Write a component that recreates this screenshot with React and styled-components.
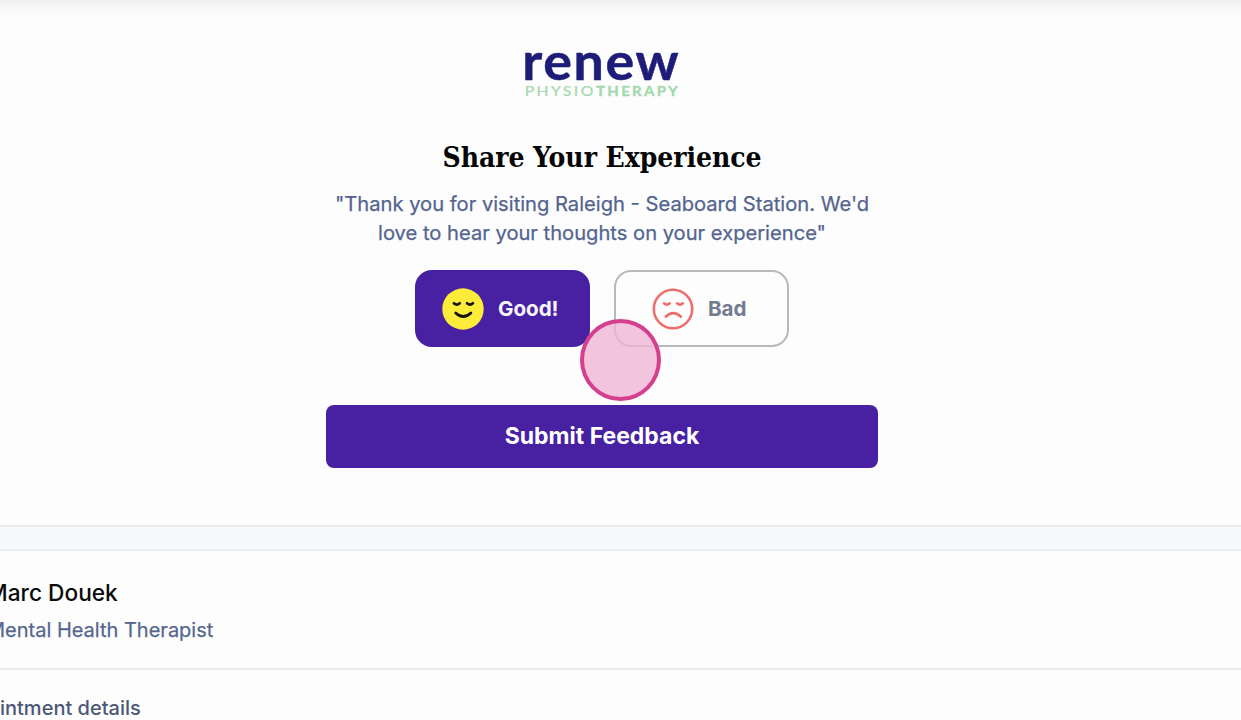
import React, { useState } from 'react';
import styled, { createGlobalStyle } from 'styled-components';

const GlobalStyle = createGlobalStyle`
  * {
    box-sizing: border-box;
  }

  body {
    margin: 0;
    background: #fdfdfd;
    font-family: 'Inter', 'Liberation Sans', sans-serif;
    overflow: hidden;
  }
`;

const Page = styled.div`
  position: relative;
  height: 720px;
  overflow: hidden;
  display: flex;
  flex-direction: column;
  background: #fdfdfd;
`;

const FeedbackSection = styled.section`
  flex: none;
  display: flex;
  flex-direction: column;
  align-items: center;
  height: 527px;
  padding: 46px 37px 0 0;
  background: linear-gradient(#f0f0f0, #f7f7f7 8px, #fdfdfd 18px);
  border-bottom: 2px solid #e9ebec;
`;

const Logo = styled.svg`
  display: block;
  overflow: visible;
  font-family: 'Lato', sans-serif;
`;

const Headline = styled.h1`
  margin: 36px 0 0;
  font-family: 'DejaVu Serif Condensed', 'DejaVu Serif', serif;
  font-size: 28px;
  font-weight: bold;
  letter-spacing: -0.05px;
  line-height: 40px;
  color: #060606;
`;

const Message = styled.p`
  width: 552px;
  margin: 11px 0 0;
  font-size: 20.15px;
  line-height: 29px;
  text-align: center;
  color: #52648f;
  -webkit-text-stroke: 0.25px #52648f;
`;

const Choices = styled.div`
  display: flex;
  gap: 24px;
  margin-top: 23px;
`;

const ChoiceButton = styled.button`
  display: flex;
  align-items: center;
  justify-content: center;
  gap: 13.5px;
  width: 175px;
  height: 77px;
  padding: 0 4px 0 0;
  border: 2px solid ${(props) => (props.$selected ? '#4721a2' : '#b9b9bb')};
  border-radius: 17px;
  background: ${(props) => (props.$selected ? '#4721a2' : 'transparent')};
  color: ${(props) => (props.$selected ? '#f8f6fd' : '#737b90')};
  font-family: inherit;
  font-size: 20.6px;
  font-weight: 700;
`;

const SubmitButton = styled.button`
  width: 552px;
  height: 63px;
  margin-top: 58px;
  padding: 0 0 2px;
  border: none;
  border-radius: 8px;
  background: #4721a2;
  color: #fff;
  font-family: inherit;
  font-size: 23px;
  font-weight: 700;
`;

const Strip = styled.div`
  flex: none;
  height: 24px;
  background: #f6fafd;
  border-bottom: 2px solid #e9ebec;
`;

const Provider = styled.section`
  flex: none;
  height: 119px;
  margin-left: -13px;
  padding-top: 26px;
  border-bottom: 2px solid #e9ebec;
  white-space: nowrap;
`;

const ProviderName = styled.div`
  font-size: 22.7px;
  font-weight: 500;
  line-height: 32px;
  color: #0a0a0a;
`;

const ProviderRole = styled.div`
  margin-top: 7px;
  font-size: 20px;
  line-height: 28px;
  color: #55678f;
  -webkit-text-stroke: 0.25px #55678f;
`;

const Details = styled.div`
  margin: 24px 0 0 -51px;
  font-size: 20px;
  font-weight: 500;
  line-height: 28px;
  color: #4b5878;
  white-space: nowrap;
`;

const TouchPoint = styled.div`
  position: absolute;
  left: 580px;
  top: 319px;
  width: 81px;
  height: 82px;
  border: 4px solid #d63e8f;
  border-radius: 50%;
  background: rgba(238, 180, 212, 0.78);
  pointer-events: none;
`;

const GoodFace = () => (
  <svg width="42" height="42" viewBox="-21 -21 42 42" fill="none">
    <circle r="20.7" fill="#fdec3a" />
    <g stroke="#15130a" strokeWidth="2.7" strokeLinecap="round">
      <path d="M-9.1 -5.7 Q-6.2 -3 -3.3 -5.7" />
      <path d="M4.1 -5.7 Q7 -3 9.9 -5.7" />
      <path d="M-7.3 4 Q0.3 11 7.9 4" />
    </g>
  </svg>
);

const BadFace = () => (
  <svg width="42" height="42" viewBox="-21 -21 42 42" fill="none" stroke="#ee6e6e" strokeWidth="2.6" strokeLinecap="round">
    <circle r="19.2" />
    <path d="M-9.1 -5.7 Q-6.2 -3 -3.3 -5.7" />
    <path d="M4.1 -5.7 Q7 -3 9.9 -5.7" />
    <path d="M-7.3 7.7 Q0.3 0.5 7.9 7.7" />
  </svg>
);

export default function App() {
  const [rating, setRating] = useState('good');

  return (
    <>
      <GlobalStyle />
      <Page>
        <FeedbackSection>
          <Logo width="156" height="56" viewBox="0 0 156 56">
            <text x="-1.8" y="33.5" fontSize="51" fontWeight="700" fill="#1d1c78" stroke="#1d1c78" strokeWidth="0.5" letterSpacing="1.6" textLength="158" lengthAdjust="spacingAndGlyphs">renew</text>
            <g fontSize="13" fill="#a3d9ac" stroke="#a3d9ac" letterSpacing="2">
              <text x="0.7" y="50.3" fontWeight="400" strokeWidth="0.2" textLength="71" lengthAdjust="spacingAndGlyphs">PHYSIO</text>
              <text x="72" y="50.3" fontWeight="700" strokeWidth="0.3" textLength="84" lengthAdjust="spacingAndGlyphs">THERAPY</text>
            </g>
          </Logo>
          <Headline>Share Your Experience</Headline>
          <Message>
            "Thank you for visiting Raleigh - Seaboard Station. We'd love to hear your thoughts on your experience"
          </Message>
          <Choices>
            <ChoiceButton $selected={rating === 'good'} onClick={() => setRating('good')}>
              <GoodFace />
              Good!
            </ChoiceButton>
            <ChoiceButton $selected={rating === 'bad'} onClick={() => setRating('bad')}>
              <BadFace />
              Bad
            </ChoiceButton>
          </Choices>
          <SubmitButton>Submit Feedback</SubmitButton>
        </FeedbackSection>
        <Strip />
        <Provider>
          <ProviderName>Marc Douek</ProviderName>
          <ProviderRole>Mental Health Therapist</ProviderRole>
        </Provider>
        <Details>Appointment details</Details>
        <TouchPoint />
      </Page>
    </>
  );
}
